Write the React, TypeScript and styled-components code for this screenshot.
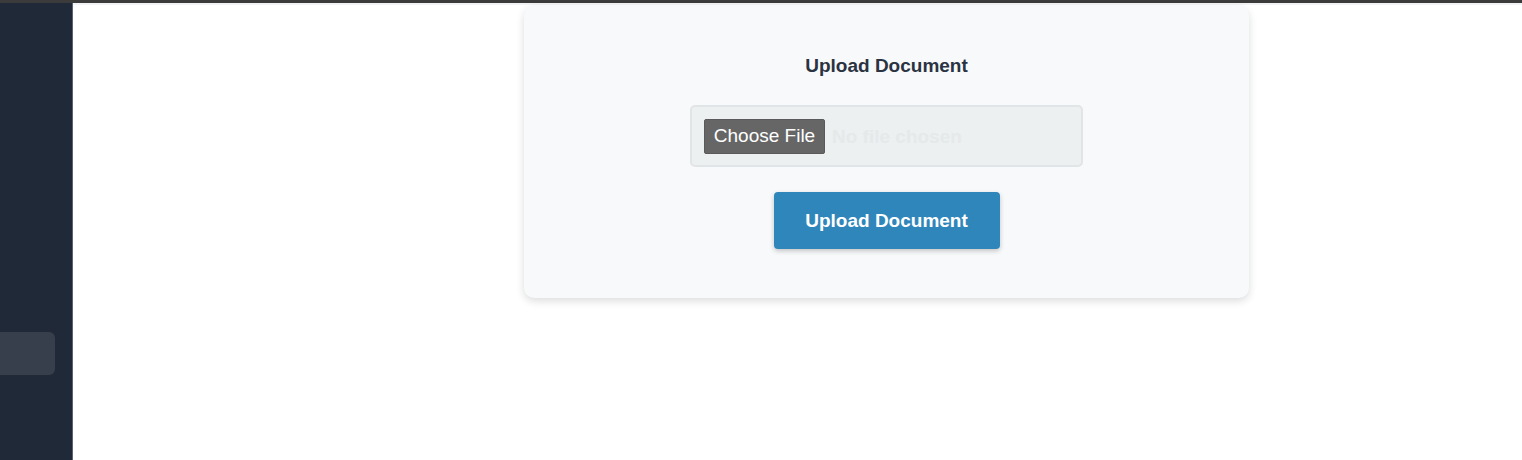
import React from "react";
import styled, { createGlobalStyle } from "styled-components";

const GlobalStyle = createGlobalStyle`
  html, body {
    margin: 0;
    padding: 0;
    background: #ffffff;
    font-family: "Liberation Sans", Arial, sans-serif;
  }
`;

const Page = styled.div`
  display: flex;
  flex-direction: column;
  height: 460px;
  overflow: hidden;
`;

const TopStrip = styled.div`
  height: 3px;
  background: #3b3b3b;
  flex-shrink: 0;
`;

const Body = styled.div`
  display: flex;
  flex: 1;
  min-height: 0;
`;

const Sidebar = styled.nav`
  width: 73px;
  flex-shrink: 0;
  background: #1f2937;
  border-right: 1px solid #5b6370;
  display: flex;
  flex-direction: column;
  padding-top: 329px;
  box-sizing: border-box;
`;

const NavItem = styled.div<{ $active?: boolean }>`
  width: 55px;
  height: 43px;
  border-radius: 0 6px 6px 0;
  background: ${(p) => (p.$active ? "#373f4c" : "transparent")};
`;

const Main = styled.main`
  flex: 1;
  border-top: 2px solid #f2f3f4;
  display: flex;
  justify-content: flex-start;
  align-items: flex-start;
  padding-left: 451px;
`;

const Card = styled.section`
  width: 725px;
  margin-top: 1px;
  box-sizing: border-box;
  padding: 49px 0 49px;
  background: #f8f9fa;
  border-radius: 10px;
  box-shadow: 0 3px 8px rgba(0, 0, 0, 0.14);
  display: flex;
  flex-direction: column;
  align-items: center;
`;

const Heading = styled.h2`
  margin: 0;
  font-size: 19px;
  line-height: 22px;
  font-weight: 700;
  color: #2a3342;
`;

const FileBox = styled.label`
  margin-top: 28px;
  width: 393px;
  height: 62px;
  box-sizing: border-box;
  padding: 0 12px;
  background: #ecf0f1;
  border: 2px solid #e1e5e7;
  border-radius: 5px;
  display: flex;
  align-items: center;
`;

const FileInput = styled.input`
  font-family: "Liberation Sans", Arial, sans-serif;
  font-size: 19px;
  font-weight: 700;
  color: #e5e9ea;
  width: 100%;

  &::file-selector-button {
    font-family: "Liberation Sans", Arial, sans-serif;
    font-size: 19px;
    font-weight: 400;
    color: #ffffff;
    background: #666666;
    border: 1px solid #5a5a5a;
    border-radius: 2px;
    height: 35px;
    width: 121px;
    padding: 0;
    margin-right: 7px;
  }
`;

const UploadButton = styled.button`
  margin-top: 25px;
  width: 226px;
  height: 57px;
  background: #2f86ba;
  color: #ffffff;
  font-family: "Liberation Sans", Arial, sans-serif;
  font-size: 19px;
  font-weight: 700;
  border: none;
  border-radius: 4px;
  box-shadow: 0 2px 5px rgba(0, 0, 0, 0.22);
  cursor: pointer;
`;

export default function App() {
  return (
    <>
      <GlobalStyle />
      <Page>
        <TopStrip />
        <Body>
          <Sidebar>
            <NavItem $active />
          </Sidebar>
          <Main>
            <Card>
              <Heading>Upload Document</Heading>
              <FileBox>
                <FileInput type="file" />
              </FileBox>
              <UploadButton>Upload Document</UploadButton>
            </Card>
          </Main>
        </Body>
      </Page>
    </>
  );
}
